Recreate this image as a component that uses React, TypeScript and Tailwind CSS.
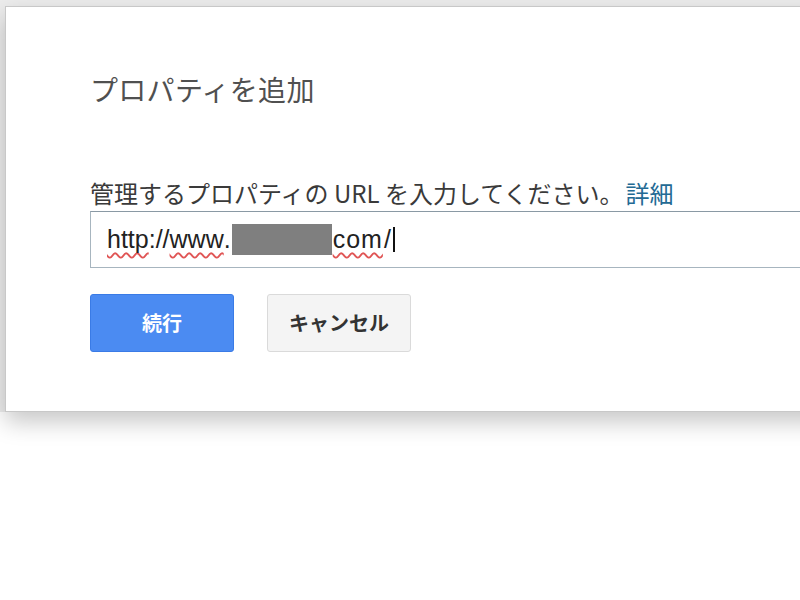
export default function App() {
  return (
    <div className="h-[600px] w-[800px] overflow-hidden bg-[linear-gradient(to_bottom,#ececec_0,#ececec_412px,#ffffff_412px)] font-['Noto_Sans_CJK_JP',sans-serif]">
      <div className="ml-[5px] mt-[6px] flex h-[406px] w-[830px] flex-col border border-[#c8c8c8] bg-white pl-[84px] pt-[64px] shadow-[0_10px_22px_rgba(0,0,0,0.22)]">
        <h1 className="text-[28px] leading-[36px] font-normal tracking-[0.3px] text-[#505050]">プロパティを追加</h1>

        <p className="mt-[70px] text-[24px] leading-[32px] text-[#3a3a3a]">
          管理するプロパティの URL を入力してください。
          <a className="ml-[2px] text-[#236a94]">詳細</a>
        </p>

        <div className="mt-[2px] flex h-[57px] w-[740px] items-center border border-[#a7b5bf] border-t-[#8a99a4] pl-[16px] font-['Liberation_Sans',Arial,sans-serif] text-[25px] text-[#222]">
          <span className="underline decoration-wavy decoration-[#e05555] decoration-[1.5px] underline-offset-[4px] [text-decoration-skip-ink:none]">http</span>
          <span>://</span>
          <span className="underline decoration-wavy decoration-[#e05555] decoration-[1.5px] underline-offset-[4px] [text-decoration-skip-ink:none]">www</span>
          <span>.</span>
          <span className="mx-[1px] h-[31px] w-[100px] bg-[#7f7f7f]" />
          <span className="tracking-[1px] underline decoration-wavy decoration-[#e05555] decoration-[1.5px] underline-offset-[4px] [text-decoration-skip-ink:none]">com</span>
          <span className="ml-[1px]">/</span>
          <span className="ml-[2px] h-[25px] w-[2px] bg-[#111]" />
        </div>

        <div className="mt-[26px] flex gap-[33px]">
          <button className="h-[58px] w-[144px] rounded-[3px] border border-[#3a7be6] bg-[#4b8bf2] text-[20px] font-bold text-white">
            続行
          </button>
          <button className="h-[58px] w-[144px] rounded-[3px] border border-[#dadada] bg-[#f4f4f4] text-[20px] font-bold text-[#333]">
            キャンセル
          </button>
        </div>
      </div>
    </div>
  );
}
